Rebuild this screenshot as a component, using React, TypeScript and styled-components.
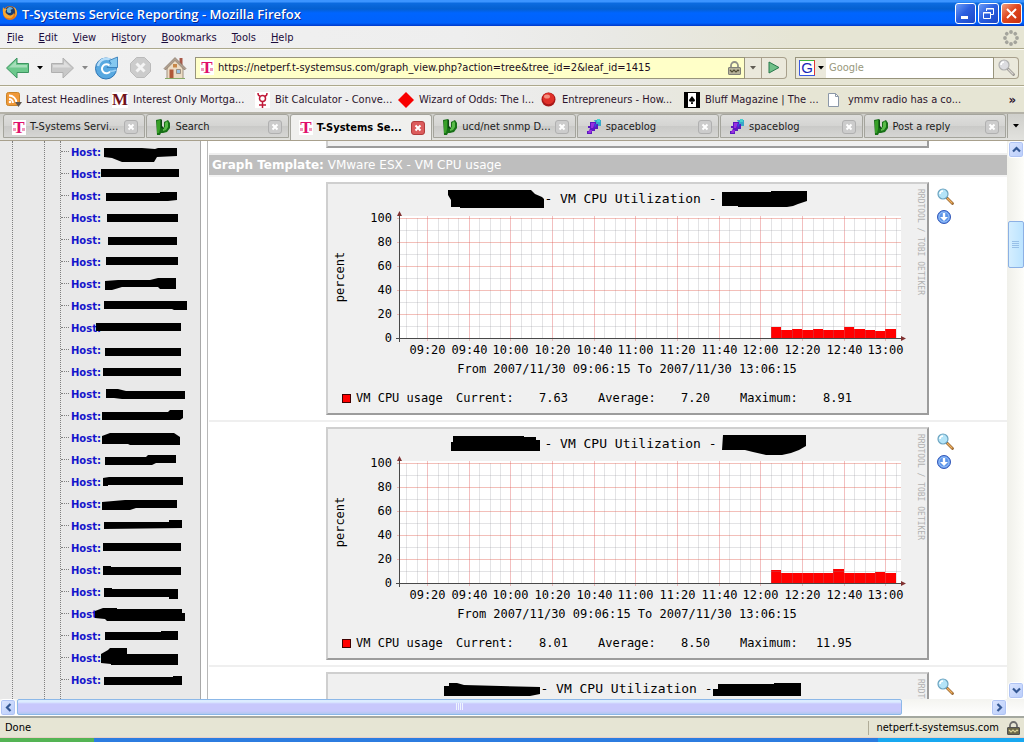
import React from "react";
import styled, { createGlobalStyle, css } from "styled-components";

const UI = `"DejaVu Sans Condensed", "DejaVu Sans", sans-serif`;
const MONO = `"DejaVu Sans Mono", monospace`;

const GlobalStyle = createGlobalStyle`
  *, *::before, *::after { box-sizing: border-box; }
  body { margin: 0; font-family: "Liberation Sans", sans-serif; color: #000; }
  button, input { font: inherit; color: inherit; border: 0; padding: 0; margin: 0; background: none; }
  button { display: flex; align-items: center; justify-content: center; cursor: pointer; }
  svg { display: block; flex: none; }
  a { text-decoration: none; color: inherit; }
`;

/* ---------- window ---------- */

const Window = styled.div`
  display: flex;
  flex-direction: column;
  height: 100vh;
  overflow: hidden;
  font: 11px/14px ${UI};
  background: linear-gradient(90deg, #f1f1f1 0%, #eeeeee 45%, #e9e9e5 60%, #e6e5d4 78%);
`;

const TitleBar = styled.header`
  display: flex;
  align-items: center;
  gap: 4px;
  flex: none;
  height: 26px;
  padding: 0 2px;
  color: #fff;
  background: linear-gradient(#3c94ff 0 2px, #0c6be0 3px, #0560d0 9px, #0065ff 13px, #0062fc 23px, #0038c8 26px);
`;

const Title = styled.h1`
  flex: 1;
  margin: 0;
  padding-top: 1px;
  font: 600 13px/18px "Open Sans", sans-serif;
  white-space: nowrap;
  text-shadow: 1px 1px 0 #0a2a90;
`;

const WindowButtons = styled.div`
  display: flex;
  gap: 2px;
`;

const WindowButton = styled.button<{ $close?: boolean }>`
  width: 21px;
  height: 21px;
  border: 1px solid #fff;
  border-radius: 3px;
  background: ${(p) =>
    p.$close
      ? "linear-gradient(135deg, #f0a080, #e04820 45%, #c83010)"
      : "linear-gradient(135deg, #6c9cf8, #2c60e0 45%, #1c48c8)"};
`;

const MenuBar = styled.nav`
  display: flex;
  align-items: center;
  flex: none;
  gap: 15px;
  height: 23px;
  padding: 1px 5px 0 7px;
  border-bottom: 1px solid #aca88c;
  color: #1c0c3c;
`;

const MenuItem = styled.button``;

const Throbber = styled.span`
  margin-left: auto;
`;

const NavBar = styled.div`
  display: flex;
  align-items: center;
  flex: none;
  height: 37px;
  padding: 0 5px 0 6px;
  border-top: 1px solid #fbfaf4;
  border-bottom: 1px solid #aca88c;
`;

const NavButton = styled.button<{ $w: number }>`
  width: ${(p) => p.$w}px;
  height: 24px;
`;

const UrlBox = styled.div`
  display: flex;
  align-items: center;
  flex: 1;
  height: 22px;
  margin-left: 7px;
  padding: 0 3px 0 4px;
  border: 1px solid #98947c;
  background: #ffffc8;
`;

const UrlInput = styled.input`
  flex: 1;
  min-width: 0;
  margin-left: 4px;
  padding-top: 1px;
  outline: none;
  color: #200c20;
`;

const BoxButton = styled.button<{ $w: number; $round?: boolean }>`
  width: ${(p) => p.$w}px;
  height: 22px;
  border: 1px solid #a8a08c;
  border-left: 0;
  border-radius: ${(p) => (p.$round ? "0 4px 4px 0" : "0")};
  background: #ebe9dc;
`;

const SearchBox = styled.div`
  display: flex;
  align-items: center;
  width: 199px;
  height: 22px;
  margin-left: 8px;
  border: 1px solid #98947c;
  background: #fff;
`;

const EngineButton = styled.button`
  gap: 3px;
  width: 30px;
  height: 20px;
  background: #ebe9dc;
`;

const SearchInput = styled.input`
  flex: 1;
  min-width: 0;
  padding: 1px 0 0 3px;
  outline: none;
  &::placeholder { color: #98987c; opacity: 1; }
`;

const BookmarkBar = styled.nav`
  display: flex;
  align-items: center;
  flex: none;
  height: 26px;
  padding: 0 8px 0 6px;
  border-top: 1px solid #fbfaf4;
  color: #2c142c;
`;

const Bookmark = styled.a<{ $first?: boolean }>`
  display: flex;
  align-items: center;
  gap: ${(p) => (p.$first ? 4 : 5)}px;
  flex: ${(p) => (p.$first ? "0 1 106px" : "0 1 143px")};
  white-space: nowrap;
`;

const MoreBookmarks = styled.button`
  margin-left: auto;
  font-weight: 700;
  font-size: 13px;
`;

const TabStrip = styled.div`
  display: flex;
  align-items: flex-end;
  flex: none;
  gap: 1px;
  height: 28px;
  padding: 0 0 2px 3px;
  border-top: 2px solid #b4b2a8;
  background: linear-gradient(#cfcfcb, #e2e2de);
`;

const Tab = styled.div<{ $active?: boolean }>`
  display: flex;
  align-items: center;
  flex: 1 1 0;
  min-width: 0;
  gap: 4px;
  height: 24px;
  padding: 2px 6px 0 8px;
  border: 1px solid #a4a49c;
  border-radius: 3px 3px 0 0;
  color: #1c1c1c;
  background: linear-gradient(#dededc, #d4d4d2 50%, #cacac8 52%, #d6d6d4);
  ${(p) =>
    p.$active &&
    css`
      height: 26px;
      margin-bottom: -2px;
      padding-top: 0;
      border-bottom: 0;
      font-weight: 700;
      color: #000;
      background: #f0f0ee;
    `}
`;

const TabLabel = styled.button`
  flex: 1;
  min-width: 0;
  justify-content: flex-start;
  font-weight: inherit;
  white-space: nowrap;
`;

const CloseTab = styled.button<{ $active?: boolean }>`
  flex: none;
  width: 14px;
  height: 14px;
  border: 1px solid ${(p) => (p.$active ? "#b03c3c" : "#b0b0b0")};
  border-radius: 3px;
  background: ${(p) => (p.$active ? "#dc5c5c" : "#cccccc")};
`;

const TabList = styled.button`
  width: 17px;
  height: 24px;
  border-left: 1px solid #a4a49c;
`;

/* ---------- page frames ---------- */

const Viewport = styled.div`
  display: flex;
  flex: 1;
  min-height: 0;
  border-top: 1px solid #a8a08c;
`;

const Sidebar = styled.aside`
  display: flex;
  flex: none;
  width: 201px;
  overflow: hidden;
  border-right: 1px solid #a8a8a8;
  background: #e9e9e9;
`;

const Guide = styled.span<{ $w: number }>`
  flex: none;
  width: ${(p) => p.$w}px;
  border-right: 1px dotted #808080;
`;

const HostList = styled.ul`
  flex: 1;
  margin: 0;
  padding: 0;
  list-style: none;
  font: 700 10px/20px "DejaVu Sans", sans-serif;
`;

const HostRow = styled.li`
  display: flex;
  align-items: center;
  height: 22px;
  white-space: nowrap;
`;

const Branch = styled.span`
  flex: none;
  width: 8px;
  height: 4px;
  margin: 0 2px 4px 0;
  border-bottom: 1px dotted #808080;
`;

const HostLink = styled.a`
  flex: none;
  width: 24px;
  padding-top: 2px;
  color: #1414cc;
`;

const HostMask = styled.svg`
  position: relative;
`;

const Splitter = styled.div`
  flex: none;
  width: 7px;
  border-right: 1px solid #b8b8b8;
  background: #fff;
`;

const Content = styled.main`
  flex: 1;
  min-width: 0;
  padding-left: 1px;
  overflow: hidden;
  background: #fff;
`;

const GraphRow = styled.section`
  display: flex;
  align-items: flex-start;
  gap: 8px;
  padding: 5px 0 5px 117px;
  border-bottom: 2px solid #efefef;
`;

const PreviousRow = styled.div`
  height: 14px;
  padding-left: 117px;
  border-bottom: 2px solid #efefef;
`;

const PreviousCard = styled.div`
  width: 603px;
  height: 7px;
  border: 2px solid;
  border-top: 0;
  border-color: #9c9c9c #9c9c9c #9c9c9c #cfcfcf;
  background: #f0f0f0;
`;

const TemplateHeading = styled.h2`
  margin: 0;
  padding: 1px 3px 0;
  font: 400 12px/19px "DejaVu Sans", sans-serif;
  color: #fff;
  background: #bebebe;
  white-space: nowrap;
`;

const HeadingWrap = styled.div`
  padding-bottom: 2px;
  background: #f4f4f4;
`;

const Card = styled.figure`
  position: relative;
  flex: none;
  width: 603px;
  height: 233px;
  margin: 0;
  border: 2px solid;
  border-color: #cfcfcf #9c9c9c #9c9c9c #cfcfcf;
  font: 12px/14px ${MONO};
  background: #f0f0f0;
`;

const CardTitle = styled.figcaption`
  display: flex;
  justify-content: center;
  height: 24px;
  padding-top: 4px;
  font-size: 13px;
  line-height: 22px;
  white-space: pre;
`;

const Watermark = styled.small`
  position: absolute;
  top: 5px;
  right: 2px;
  font-size: 8px;
  line-height: 10px;
  writing-mode: vertical-rl;
  white-space: nowrap;
  color: #b0b0b0;
`;

const Legend = styled.div`
  display: grid;
  grid-template-columns: 14px 100px 56px 56px 30px 56px 56px 30px 56px 56px;
  align-items: center;
  padding: 5px 0 0 14px;
  white-space: nowrap;
`;

const Swatch = styled.i`
  width: 9px;
  height: 9px;
  border: 1px solid #400000;
  background: #f00;
`;

const Stat = styled.span<{ $col: number; $end?: boolean }>`
  grid-column: ${(p) => p.$col};
  grid-row: 1;
  text-align: ${(p) => (p.$end ? "right" : "left")};
`;

const RowTools = styled.div`
  display: flex;
  flex-direction: column;
  gap: 5px;
  padding-top: 6px;
`;

/* ---------- scroll bars, status ---------- */

const VBar = styled.div`
  display: flex;
  flex-direction: column;
  flex: none;
  width: 17px;
  padding-left: 1px;
  background: linear-gradient(90deg, #f0f0ea, #fdfdf9);
`;

const ScrollButton = styled.button`
  flex: none;
  width: 16px;
  height: 17px;
  border: 1px solid #fff;
  border-radius: 3px;
  background: linear-gradient(135deg, #dce6ff, #b8ccfa);
  box-shadow: inset 0 0 0 1px #b0c4f4;
`;

const VThumb = styled.div`
  display: flex;
  align-items: center;
  justify-content: center;
  height: 47px;
  margin: 63px 0 auto;
  border: 1px solid #8cb0e4;
  border-radius: 2px;
  background: linear-gradient(90deg, #d4eeff, #bce4ff);
`;

const HBar = styled.div`
  display: flex;
  flex: none;
  height: 17px;
  padding-right: 17px;
  background: linear-gradient(#f4f4f0, #ffffff);
`;

const HTrack = styled.div`
  flex: 1;
  padding-right: 89px;
`;

const HThumb = styled.div`
  display: flex;
  align-items: center;
  justify-content: center;
  height: 16px;
  margin: 0 0 0 1px;
  border: 1px solid #8cb8e8;
  border-radius: 2px;
  background: linear-gradient(#dcecff 0 2px, #c8c8fc 4px, #c8c8fc 11px, #b0c8f0 14px);
`;

const StatusBar = styled.footer`
  display: flex;
  align-items: center;
  flex: none;
  height: 22px;
  padding: 0 4px 0 5px;
  border-top: 2px solid #a4a8a0;
  border-bottom: 1px solid #e8d0c8;
  background: #e6e5d4;
`;

const StatusHost = styled.div`
  display: flex;
  align-items: center;
  gap: 8px;
  margin-left: auto;
  padding-left: 7px;
  border-left: 1px solid #b0ac98;
`;

const TaskStrip = styled.div`
  flex: none;
  height: 4px;
  background: linear-gradient(90deg, #54b454 0 94px, transparent 94px),
    linear-gradient(270deg, #18a8f0 0 146px, #2c7ce0 146px);
`;

/* ---------- icons ---------- */

const FirefoxIcon = () => (
  <svg width="16" height="16" viewBox="0 0 16 16">
    <circle cx="8" cy="8" r="7" fill="#e87818" />
    <circle cx="8" cy="6.500" r="5" fill="#1c3c70" />
    <path d="M5 4c2-3 5-2 6 0-2 0-3 1-2 2 1 2-2 3-4 1z" fill="#6cb0d8" />
    <path d="M1 2c1 2 2 2 4 2-2 2-2 4 0 5 2 2 5 2 7-1 0 4-3 6-6 5C2 13 0 8 1 2z" fill="#f8a830" />
    <path d="M12 2c3 2 4 7 1 10 1-3 1-6-1-10z" fill="#f8c040" />
  </svg>
);

const TIcon = () => (
  <svg width="14" height="15" viewBox="0 0 14 15">
    <path fill="#fff" d="M0 0h14v15H0z" />
    <text x="7" y="13" textAnchor="middle" fontFamily="Liberation Serif, serif" fontWeight="700" fontSize="17" fill="#e0106c">
      T
    </text>
    <path d="M1 8h3v3H1zM10 8h3v3h-3z" fill="#ee98bc" />
  </svg>
);

const ForumIcon = () => (
  <svg width="16" height="16" viewBox="0 0 16 16">
    <path d="M1 1l5-1v7l1 2h2V3l4-2 2 3v5l-3 4-4 1H6l-1 2H2z" fill="#187018" />
    <path d="M2 2l3-1v9l-1 4H2z" fill="#38a028" />
    <path d="M10 4l2-2 1 2v4l-2 3-3 1V9l2-1z" fill="#58bc48" />
    <path d="M6 0l1 1v6l2 2v1L6 9z" fill="#0c4810" />
  </svg>
);

const SpaceIcon = () => (
  <svg width="16" height="16" viewBox="0 0 16 16">
    <path d="M8 1h7v6h-4z" fill="#38a8c8" />
    <path d="M11 0h3v3h-3z" fill="#48d0d0" />
    <path d="M4 3h6v2h2v5H9v2H6v3H1v-3h2l1-3H2V7h2z" fill="#5c18c0" />
    <path d="M5 4h4L7 9H5zM3 11h3l-1 3H2z" fill="#9830e0" />
    <path d="M8 5h3l-2 4z" fill="#3848d8" />
  </svg>
);

const RssIcon = () => (
  <svg width="16" height="16" viewBox="0 0 16 16">
    <rect x=".5" y=".5" width="13" height="13" rx="2" fill="#f09838" stroke="#c88428" />
    <g fill="none" stroke="#fff" strokeWidth="1.800">
      <path d="M3 7a4 4 0 0 1 4 4M3 3.500A7.500 7.500 0 0 1 10.500 11" />
    </g>
    <circle cx="4" cy="10" r="1.300" fill="#fff" />
    <path d="M9 10h7l-3.500 5z" fill="#605850" />
  </svg>
);

const MIcon = () => (
  <svg width="16" height="16" viewBox="0 0 16 16">
    <path fill="#fff" d="M0 0h16v16H0z" />
    <text x="8" y="13" textAnchor="middle" fontFamily="Liberation Serif, serif" fontWeight="700" fontSize="17" fill="#701018">
      M
    </text>
  </svg>
);

const BitIcon = () => (
  <svg width="15" height="16" viewBox="0 0 15 16">
    <path fill="#fff" d="M0 0h15v16H0z" />
    <g fill="none" stroke="#c01838" strokeWidth="1.500">
      <path d="M3 1c0 2 1 3 2 3M12 1c0 2-1 3-2 3M7.500 9.500V16M4 13h7" />
      <circle cx="7.500" cy="6.500" r="3" />
    </g>
  </svg>
);

const DiamondIcon = () => (
  <svg width="16" height="16" viewBox="0 0 16 16">
    <path d="M8 0l8 8-8 8-8-8z" fill="#f80000" />
  </svg>
);

const BallIcon = () => (
  <svg width="16" height="16" viewBox="0 0 16 16">
    <circle cx="7.500" cy="7.500" r="7" fill="#a81818" />
    <circle cx="7.500" cy="6.500" r="5.800" fill="#e03028" />
    <ellipse cx="6" cy="4.500" rx="3" ry="2" fill="#f49080" />
  </svg>
);

const SpadeIcon = () => (
  <svg width="16" height="16" viewBox="0 0 16 16">
    <path d="M0 0h16v16H0z" />
    <path fill="#fff" d="M4 1h8v14H4z" />
    <path d="M8 4l3 4c0 2-2 2-2.500 1L9 12H7l.5-3C7 10 5 10 5 8z" />
  </svg>
);

const PageIcon = () => (
  <svg width="16" height="16" viewBox="0 0 16 16">
    <path d="M1.500 1.500h7l3 3v10h-10z" fill="#fff" stroke="#8c98a8" />
    <path d="M8.500 1.500v3h3" fill="none" stroke="#8c98a8" />
  </svg>
);

const ArrowIcon = ({ back }: { back?: boolean }) => (
  <svg width="24" height="24" viewBox="0 0 24 24">
    <path
      d={back ? "M.5 12L11 2v5.500h11.500v9H11V22z" : "M23.500 12L13 2v5.500H1.500v9H13V22z"}
      fill={back ? "#6cc88c" : "#c8c8c8"}
      stroke={back ? "#3c9460" : "#b0b0b0"}
      strokeLinejoin="round"
    />
    <path d={back ? "M3 11.500l7-6.500v4h11v2.500z" : "M21 11.500L14 5v4H3v2.500z"} fill="#fff" fillOpacity=".4" />
  </svg>
);

const Caret = ({ color = "#000" }: { color?: string }) => (
  <svg width="6" height="4" viewBox="0 0 6 4">
    <path d="M0 0h6L3 3.500z" fill={color} />
  </svg>
);

const ReloadIcon = () => (
  <svg width="24" height="24" viewBox="0 0 24 24">
    <circle cx="11" cy="12.500" r="10.500" fill="#58a8e0" stroke="#2c74b4" />
    <path d="M3 10c2-8 10-9 15-5" fill="none" stroke="#b4dcf8" strokeWidth="2.400" />
    <path d="M22.500 1v10.500H12l4-4-2-3z" fill="#84c8f0" stroke="#2c74b4" strokeWidth=".8" />
    <path d="M14.500 9.500a4.500 4.500 0 1 0 .5 6" fill="none" stroke="#fff" strokeWidth="2" />
    <path d="M15 15c3 1 5-1 6.500-1" fill="none" stroke="#9cd0f4" strokeWidth="1.400" />
  </svg>
);

const StopIcon = () => (
  <svg width="24" height="24" viewBox="0 0 24 24">
    <path d="M7.500 1.500h8l6 6v8l-6 6h-8l-6-6v-8z" fill="#cccccc" stroke="#bababa" />
    <path d="M7.500 7.500l8 8M15.500 7.500l-8 8" stroke="#f4f4f4" strokeWidth="3" />
  </svg>
);

const HomeIcon = () => (
  <svg width="24" height="24" viewBox="0 0 24 24">
    <path d="M16.500 2h3v7h-3z" fill="#a85848" />
    <path d="M4 11l8-8 8 8v11.500H4z" fill="#ecdcc4" stroke="#a09080" />
    <path d="M1 12.500L12 1.500l11 11-1.500 1.500L12 4.500 2.500 14z" fill="#b0a090" stroke="#786858" strokeWidth=".6" />
    <path d="M6.500 13.500h4v9h-4z" fill="#b05838" />
    <path d="M13.500 13.500h4v4h-4z" fill="#98c0e0" stroke="#908070" strokeWidth=".8" />
    <path d="M10 8h4v3.500h-4z" fill="#c88848" />
    <path d="M2 22.500h20" stroke="#88a868" />
  </svg>
);

const LockIcon = ({ dark }: { dark?: boolean }) => (
  <svg width="13" height="14" viewBox="0 0 13 14">
    <path d="M3 6.500V4.500a3.500 3.500 0 0 1 7 0v2" fill="none" stroke={dark ? "#6c6c6c" : "#909088"} strokeWidth="1.800" />
    <rect x=".5" y="6.500" width="12" height="7" rx=".5" fill={dark ? "#6c6848" : "#b4b098"} stroke={dark ? "#505050" : "#808078"} />
    <path d="M2 9l2 2 2-2 2 2 2-2 1 1" fill="none" stroke={dark ? "#d8d098" : "#504c34"} strokeWidth="1.200" />
  </svg>
);

const GoIcon = () => (
  <svg width="12" height="13" viewBox="0 0 12 13">
    <path d="M1 1l10 5.500L1 12z" fill="#70c088" stroke="#28784c" />
  </svg>
);

const GoogleIcon = () => (
  <svg width="16" height="16" viewBox="0 0 16 16">
    <path fill="#fff" d="M0 0h16v16H0z" />
    <path d="M0 .5h15.500" stroke="#3cb43c" />
    <path d="M15.500 0v16" stroke="#e03838" />
    <path d="M.5 0v15.500H16" fill="none" stroke="#3858e0" />
    <text x="8" y="13" textAnchor="middle" fontFamily="Liberation Sans, sans-serif" fontSize="15" fill="#1828b8">
      G
    </text>
  </svg>
);

const LensIcon = ({ grey }: { grey?: boolean }) => (
  <svg width="17" height="17" viewBox="0 0 17 17">
    <path d="M10 10l5.500 5.500" stroke={grey ? "#8c8884" : "#8c5820"} strokeWidth="2.600" strokeLinecap="round" />
    <path d="M10.500 10.500l4.500 4.500" stroke={grey ? "#d8d4d0" : "#f0b060"} strokeWidth="1.400" strokeLinecap="round" />
    <circle cx="6" cy="6" r="5" fill={grey ? "#dcdce0" : "#b4e4f8"} stroke={grey ? "#b0b0b0" : "#6ca4c0"} strokeWidth="1.200" />
    <path d="M3 6a3 3 0 0 1 3-3" stroke="#fff" strokeWidth="1.600" fill="none" />
  </svg>
);

const DownloadIcon = () => (
  <svg width="15" height="15" viewBox="0 0 15 15">
    <circle cx="7" cy="7" r="6.500" fill="#5c94e8" stroke="#3458b8" />
    <circle cx="7" cy="7" r="5" fill="none" stroke="#9cc4fc" />
    <path d="M5.800 3h2.400v4H11l-4 4-4-4h2.800z" fill="#fff" />
  </svg>
);

const ThrobberIcon = () => (
  <svg width="16" height="16" viewBox="0 0 16 16" fill="#a4a49c">
    {[0, 45, 90, 135, 180, 225, 270, 315].map((a) => (
      <circle key={a} cx="8" cy="2" r="1.900" transform={`rotate(${a} 8 8)`} />
    ))}
  </svg>
);

const CrossIcon = () => (
  <svg width="8" height="8" viewBox="0 0 8 8">
    <path d="M1.500 1.500l5 5M6.500 1.500l-5 5" stroke="#fff" strokeWidth="2" />
  </svg>
);

const Chevron = ({ turn }: { turn: number }) => (
  <svg width="9" height="9" viewBox="0 0 9 9">
    <path d="M1 6.500L4.500 3 8 6.500" fill="none" stroke="#345894" strokeWidth="2.200" transform={`rotate(${turn} 4.500 4.500)`} />
  </svg>
);

const Grip = ({ vertical }: { vertical?: boolean }) => (
  <svg width="8" height="8" viewBox="0 0 8 8">
    <path
      d={vertical ? "M.5 0v7M2.500 0v7M4.500 0v7M6.500 0v7" : "M0 .5h7M0 2.500h7M0 4.500h7M0 6.500h7"}
      stroke={vertical ? "#eef4fe" : "#98c0e8"}
    />
  </svg>
);

/* ---------- data ---------- */

/* Outline of the bar that hides each host name; x is counted from the window edge. */
const hosts = [
  "104,7 142,7 155,8 158,7 177,7 177,15 157,16 154,21 122,21 112,17 104,16",
  "101,6 179,6 179,14 101,14",
  "106,8 160,8 160,7 177,7 177,15 168,16 106,16",
  "107,7 178,7 178,15 107,15",
  "108,8 177,8 177,16 108,16",
  "106,6 178,6 178,14 106,14",
  "105,8 118,7 150,7 158,5 176,5 176,16 160,16 158,14 122,14 112,17 105,17",
  "104,6 187,6 187,15 174,15 172,14 104,14",
  "96,6 181,6 181,14 96,14",
  "105,9 181,9 181,17 105,17",
  "103,7 181,7 181,15 103,15",
  "106,6 118,6 126,8 185,8 185,16 122,16 114,15 106,15",
  "102,7 168,7 170,5 183,5 183,13 180,15 102,15",
  "102,9 110,6 174,6 180,10 180,18 130,18 128,17 102,17",
  "105,8 146,8 148,6 176,6 176,14 156,14 152,16 105,16",
  "103,7 109,6 183,6 183,14 108,14 108,15 103,15",
  "102,9 125,7 177,7 177,15 136,15 130,17 102,17",
  "104,7 169,7 169,5 182,5 182,13 104,14",
  "103,6 181,6 181,14 103,14",
  "103,7 111,7 111,8 181,8 181,16 103,16",
  "104,7 112,7 112,8 178,8 178,18 169,18 169,16 104,16",
  "95,8 103,5 117,5 117,6 182,6 182,10 185,10 185,18 107,18 105,16 95,15",
  "105,7 161,7 161,6 178,6 178,15 105,15",
  "101,7 108,3 110,1 127,1 127,7 178,7 178,18 111,18 111,17 101,16",
  "104,8 173,8 173,7 182,7 182,15 182,16 104,16",
];

type Graph = {
  left: string;
  right: string;
  rightWidth: number;
  values: number[];
  current: string;
  average: string;
  maximum: string;
};

const graphs: Graph[] = [
  {
    left: "0,2 83,2 87,6 94,9 96,11 96,20 12,20 12,19 3,19 3,12 0,7",
    right: "5,4 54,4 54,3 90,3 90,13 81,16 76,18 70,19 21,19 21,18 5,18",
    rightWidth: 90,
    values: [8.91, 6.6, 7.6, 6.8, 7.9, 6.8, 6.6, 8.9, 7.9, 6.6, 6.2, 7.63],
    current: "7.63",
    average: "7.20",
    maximum: "8.91",
  },
  {
    left: "3,9 5,9 5,3 76,3 76,4 88,4 88,7 92,7 92,18 3,18",
    right: "6,2 89,2 89,13 82,17 74,20 65,22 49,22 36,19 28,17 5,17",
    rightWidth: 90,
    values: [10.8, 8.5, 8.5, 8, 8.4, 8.4, 11.95, 8.4, 8.4, 8.4, 9, 8.01],
    current: "8.01",
    average: "8.50",
    maximum: "11.95",
  },
];

const bookmarks = [
  { icon: <RssIcon />, text: "Latest Headlines" },
  { icon: <MIcon />, text: "Interest Only Mortga..." },
  { icon: <BitIcon />, text: "Bit Calculator - Conve..." },
  { icon: <DiamondIcon />, text: "Wizard of Odds: The l..." },
  { icon: <BallIcon />, text: "Entrepreneurs - How..." },
  { icon: <SpadeIcon />, text: "Bluff Magazine | The ..." },
  { icon: <PageIcon />, text: "ymmv radio has a co..." },
];

const tabs = [
  { icon: <TIcon />, text: "T-Systems Servi..." },
  { icon: <ForumIcon />, text: "Search" },
  { icon: <TIcon />, text: "T-Systems Se...", active: true },
  { icon: <ForumIcon />, text: "ucd/net snmp D..." },
  { icon: <SpaceIcon />, text: "spaceblog" },
  { icon: <SpaceIcon />, text: "spaceblog" },
  { icon: <ForumIcon />, text: "Post a reply" },
];

/* ---------- chart ---------- */

const X0 = 71; // the time 09:06:15
const Y0 = 130; // zero per cent
const PER_MIN = 500 / 240;
const timeX = (minutes: number) => Math.floor(X0 + (minutes - 6.25) * PER_MIN) + 0.5;

const Plot = ({ values }: { values: number[] }) => {
  const minutes = Array.from({ length: 48 }, (_, i) => 10 + i * 5);
  return (
    <svg width="599" height="178" viewBox="0 0 599 178" fontFamily={MONO} fontSize="12">
      <path d={`M${X0} 8h502v${Y0 - 8}H${X0}z`} fill="#fff" />
      {values.map((v, i) => {
        const left = Math.floor(timeX(185 + i * 5));
        const right = Math.floor(timeX(190 + i * 5));
        const h = Math.round(v * 1.2);
        return <rect key={i} x={left} y={Y0 - h} width={right - left} height={h} fill="#f00" />;
      })}
      {minutes.map((m) => {
        const major = m % 20 === 0;
        return (
          <path
            key={m}
            d={`M${timeX(m)} ${major ? 8 : 10}V${major ? Y0 + 3 : Y0}`}
            stroke={major ? "#e06060" : "#909098"}
            strokeOpacity={major ? 0.4 : 0.25}
          />
        );
      })}
      {Array.from({ length: 10 }, (_, i) => {
        const major = i % 2 === 1;
        return (
          <path
            key={i}
            d={`M${major ? X0 - 2 : X0} ${Y0 - 11.5 - i * 12}H573`}
            stroke={major ? "#e06050" : "#909098"}
            strokeOpacity={major ? 0.4 : 0.25}
          />
        );
      })}
      <path d={`M${X0 + 0.5} ${Y0 + 4}V8M${X0 - 3} ${Y0 + 0.5}H576`} stroke="#484848" fill="none" />
      <path d={`M${X0 - 2} 8h5l-2.500-5zM573 ${Y0 - 2}v5l5-2.500z`} fill="#803030" />
      {[0, 20, 40, 60, 80, 100].map((v) => (
        <text key={v} x="64" y={Y0 + 4 - v * 1.2} textAnchor="end">
          {v}
        </text>
      ))}
      {Array.from({ length: 12 }, (_, i) => 20 + i * 20).map((m) => {
        const hour = String(9 + Math.floor(m / 60)).padStart(2, "0");
        const min = String(m % 60).padStart(2, "0");
        return (
          <text key={m} x={timeX(m)} y="146" textAnchor="middle">
            {`${hour}:${min}`}
          </text>
        );
      })}
      <text x="299" y="165" textAnchor="middle">
        From 2007/11/30 09:06:15 To 2007/11/30 13:06:15
      </text>
      <text transform="translate(16 69) rotate(-90)" textAnchor="middle">
        percent
      </text>
    </svg>
  );
};

const GraphImage = ({ graph }: { graph: Graph }) => (
  <Card>
    <CardTitle>
      <svg width="96" height="24" viewBox="0 0 96 24">
        <polygon points={graph.left} />
      </svg>
      - VM CPU Utilization -
      <svg width={graph.rightWidth} height="24" viewBox={`0 0 ${graph.rightWidth} 24`}>
        <polygon points={graph.right} />
      </svg>
    </CardTitle>
    <Plot values={graph.values} />
    <Legend>
      <Swatch />
      <Stat $col={2}>VM CPU usage</Stat>
      <Stat $col={3}>Current:</Stat>
      <Stat $col={4} $end>{graph.current}</Stat>
      <Stat $col={6}>Average:</Stat>
      <Stat $col={7} $end>{graph.average}</Stat>
      <Stat $col={9}>Maximum:</Stat>
      <Stat $col={10} $end>{graph.maximum}</Stat>
    </Legend>
    <Watermark>RRDTOOL / TOBI OETIKER</Watermark>
  </Card>
);

/* The last row lies mostly below the fold, so only its title is filled in. */
const LoadingImage = () => (
  <Card>
    <CardTitle>
      <svg width="96" height="24" viewBox="0 0 96 24">
        <polygon points="0,8 5,8 5,5 13,5 20,7 96,9 96,16 86,18 0,18" />
      </svg>
      - VM CPU Utilization -
      <svg width="98" height="24" viewBox="0 0 98 24">
        <polygon points="0,11 5,11 5,6 61,6 61,5 88,5 88,18 0,18" />
      </svg>
    </CardTitle>
    <Watermark>RRDTOOL / TOBI OETIKER</Watermark>
  </Card>
);

const Tools = () => (
  <RowTools>
    <a href="#" aria-label="Zoom graph"><LensIcon /></a>
    <a href="#" aria-label="Export graph"><DownloadIcon /></a>
  </RowTools>
);

export default function App() {
  return (
    <Window>
      <GlobalStyle />
      <TitleBar>
        <FirefoxIcon />
        <Title>T-Systems Service Reporting - Mozilla Firefox</Title>
        <WindowButtons>
          <WindowButton aria-label="Minimize">
            <svg width="15" height="15" viewBox="0 0 15 15"><path d="M3 10h7v3H3z" fill="#fff" /></svg>
          </WindowButton>
          <WindowButton aria-label="Restore">
            <svg width="15" height="15" viewBox="0 0 15 15" fill="none" stroke="#fff">
              <path d="M5.500 5V2.500h7v6H10M5 3h8M2.500 6.500h7v6h-7zM2 7h8" />
            </svg>
          </WindowButton>
          <WindowButton $close aria-label="Close">
            <svg width="15" height="15" viewBox="0 0 15 15"><path d="M3 3l9 9M12 3l-9 9" stroke="#fff" strokeWidth="2" /></svg>
          </WindowButton>
        </WindowButtons>
      </TitleBar>

      <MenuBar>
        {["File", "Edit", "View", "History", "Bookmarks", "Tools", "Help"].map((m) => (
          <MenuItem key={m}>
            {m === "History" ? <span>Hi<u>s</u>tory</span> : <span><u>{m[0]}</u>{m.slice(1)}</span>}
          </MenuItem>
        ))}
        <Throbber><ThrobberIcon /></Throbber>
      </MenuBar>

      <NavBar>
        <NavButton $w={24} aria-label="Back"><ArrowIcon back /></NavButton>
        <NavButton $w={19} aria-label="Back history"><Caret /></NavButton>
        <NavButton $w={26} aria-label="Forward"><ArrowIcon /></NavButton>
        <NavButton $w={19} aria-label="Forward history"><Caret color="#888" /></NavButton>
        <NavButton $w={26} aria-label="Reload"><ReloadIcon /></NavButton>
        <NavButton $w={42} aria-label="Stop"><StopIcon /></NavButton>
        <NavButton $w={26} aria-label="Home"><HomeIcon /></NavButton>
        <UrlBox>
          <TIcon />
          <UrlInput
            aria-label="Address"
            defaultValue="https://netperf.t-systemsus.com/graph_view.php?action=tree&tree_id=2&leaf_id=1415"
          />
          <LockIcon />
        </UrlBox>
        <BoxButton $w={17} aria-label="Address history"><Caret color="#605c54" /></BoxButton>
        <BoxButton $w={25} $round aria-label="Go"><GoIcon /></BoxButton>
        <SearchBox>
          <EngineButton aria-label="Search engine"><GoogleIcon /><Caret /></EngineButton>
          <SearchInput aria-label="Search" placeholder="Google" />
        </SearchBox>
        <BoxButton $w={25} $round aria-label="Search"><LensIcon grey /></BoxButton>
      </NavBar>

      <BookmarkBar>
        {bookmarks.map((b, i) => (
          <Bookmark key={b.text} href="#" $first={i === 0}>
            {b.icon}
            {b.text}
          </Bookmark>
        ))}
        <MoreBookmarks aria-label="More bookmarks">»</MoreBookmarks>
      </BookmarkBar>

      <TabStrip>
        {tabs.map((t, i) => (
          <Tab key={i} $active={t.active}>
            {t.icon}
            <TabLabel>{t.text}</TabLabel>
            <CloseTab $active={t.active} aria-label="Close tab"><CrossIcon /></CloseTab>
          </Tab>
        ))}
        <TabList aria-label="List tabs"><Caret /></TabList>
      </TabStrip>

      <Viewport>
        <Sidebar>
          <Guide $w={13} />
          <Guide $w={32} />
          <Guide $w={16} />
          <HostList>
            {hosts.map((shape, i) => (
              <HostRow key={i}>
                <Branch />
                <HostLink href="#">Host:</HostLink>
                <HostMask width="94" height="22" viewBox="95 0 94 22">
                  <polygon points={shape} />
                </HostMask>
              </HostRow>
            ))}
          </HostList>
        </Sidebar>
        <Splitter />
        <Content>
          <PreviousRow><PreviousCard /></PreviousRow>
          <HeadingWrap>
            <TemplateHeading><b>Graph Template:</b> VMware ESX - VM CPU usage</TemplateHeading>
          </HeadingWrap>
          {graphs.map((g) => (
            <GraphRow key={g.current}>
              <GraphImage graph={g} />
              <Tools />
            </GraphRow>
          ))}
          <GraphRow>
            <LoadingImage />
            <Tools />
          </GraphRow>
        </Content>
        <VBar>
          <ScrollButton aria-label="Scroll up"><Chevron turn={0} /></ScrollButton>
          <VThumb><Grip /></VThumb>
          <ScrollButton aria-label="Scroll down"><Chevron turn={180} /></ScrollButton>
        </VBar>
      </Viewport>
      <HBar>
        <ScrollButton aria-label="Scroll left"><Chevron turn={-90} /></ScrollButton>
        <HTrack><HThumb><Grip vertical /></HThumb></HTrack>
        <ScrollButton aria-label="Scroll right"><Chevron turn={90} /></ScrollButton>
      </HBar>
      <StatusBar>
        Done
        <StatusHost>netperf.t-systemsus.com<LockIcon dark /></StatusHost>
      </StatusBar>
      <TaskStrip />
    </Window>
  );
}
